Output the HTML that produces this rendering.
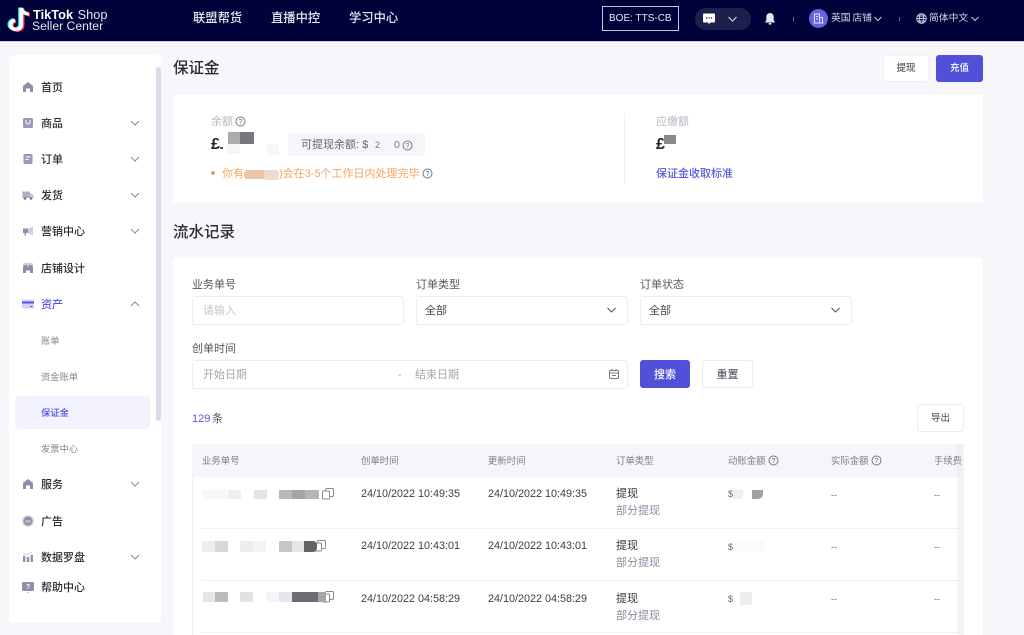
<!DOCTYPE html>
<html lang="zh"><head><meta charset="utf-8"><title>保证金</title>
<style>
*{box-sizing:border-box}
html,body{margin:0;padding:0}
html{background:#f6f6fb}
body{width:1024px;height:635px;overflow:hidden;position:relative;background:#f6f6fb;font-family:"Liberation Sans","Noto Sans CJK SC",sans-serif;color:#33333d;filter:blur(.3px)}
.a,.t,svg.a{position:absolute}
.t{white-space:nowrap;line-height:16px;font-size:11px}
.c{transform:translateY(-50%)}
.m{left:41px;font-weight:500;color:#2c2c36;font-size:11px}
.s{left:41px;font-size:9.3px;color:#85858f}
.h{font-size:9.4px;color:#7d7d8a}
.l{font-size:11px;color:#55555f}
.b{position:absolute;background:#fff;border:1px solid #ebebf4;border-radius:3px}
.d{font-size:10.8px;color:#3c3c46;font-family:"Liberation Sans",sans-serif}
.r{font-size:11px;color:#33333d}
.g{font-size:11px;color:#8a8a9e}
.x{font-size:9px;color:#666670}
.p{position:absolute}
.line{position:absolute;left:202px;width:762px;height:1px;background:#f0f0f5}
</style></head><body>
<!-- header -->
<div class="a" style="left:0;top:0;width:1024px;height:42px;background:#00023a;border-bottom:1px solid #c9c9de"></div>
<svg class="a" style="left:5px;top:5.5px" width="28" height="27.5" viewBox="0 0 24 27" preserveAspectRatio="none" fill="none">
<path d="M14 2V18.5A4.6 4.6 0 1 1 8.5 14" stroke="#ff2d55" stroke-width="3.4" transform="translate(1 .8)"/>
<path d="M14 2C14.6 5.5 17 7.5 20.5 8" stroke="#ff2d55" stroke-width="3.2" transform="translate(1 .8)"/>
<path d="M14 2V18.5A4.6 4.6 0 1 1 8.5 14" stroke="#25f4ee" stroke-width="3.4" transform="translate(-1 -.5)"/>
<path d="M14 2C14.6 5.5 17 7.5 20.5 8" stroke="#25f4ee" stroke-width="3.2" transform="translate(-1 -.5)"/>
<path d="M14 2V18.5A4.6 4.6 0 1 1 8.5 14" stroke="#fff" stroke-width="3.2"/>
<path d="M14 2C14.6 5.5 17 7.5 20.5 8" stroke="#fff" stroke-width="3"/>
</svg>
<div class="t" style="left:33px;top:7px;font-size:12.8px;color:#fff"><b>TikTok</b> <span style="color:#e4e4ec;margin-left:1px">Shop</span></div>
<div class="t" style="left:32px;top:18px;font-size:12.2px;color:#e4e4ec">Seller Center</div>
<div class="t" style="left:193px;top:10px;font-size:12.3px;color:#e8e8f0;font-weight:500">联盟帮货</div>
<div class="t" style="left:271px;top:10px;font-size:12.3px;color:#e8e8f0;font-weight:500">直播中控</div>
<div class="t" style="left:349px;top:10px;font-size:12.3px;color:#e8e8f0;font-weight:500">学习中心</div>
<div class="a" style="left:602px;top:6px;width:77px;height:25px;border:1px solid #c6c6d4"></div>
<div class="t" style="left:609px;top:11px;font-size:10px;color:#e6e6ee">BOE: TTS-CB</div>
<div class="a" style="left:695px;top:8px;width:56px;height:22px;border-radius:11px;background:#1d1f4c"></div>
<svg class="a" style="left:702px;top:12px" width="14" height="14" viewBox="0 0 14 14"><path d="M2 1.5H12A1 1 0 0 1 13 2.5V9.500A1 1 0 0 1 12 10.500H8.500L6.500 12.500V10.500H2A1 1 0 0 1 1 9.500V2.500A1 1 0 0 1 2 1.500Z" fill="#fff"/><circle cx="4.500" cy="6" r=".7" fill="#1d1f4c"/><circle cx="7" cy="6" r=".7" fill="#1d1f4c"/><circle cx="9.500" cy="6" r=".7" fill="#1d1f4c"/></svg>
<svg class="a" style="left:727px;top:15px" width="11" height="8" viewBox="0 0 11 8" fill="none"><path d="M1.500 2 5.500 6 9.500 2" stroke="#d8d8e4" stroke-width="1.100"/></svg>
<svg class="a" style="left:763px;top:12px" width="14" height="14" viewBox="0 0 14 14"><path d="M7 1C4.500 1 3.300 3 3.300 5V8.300L2 10.500H12L10.700 8.300V5C10.700 3 9.500 1 7 1Z" fill="#e6e6ee"/><rect x="5.500" y="11" width="3" height="1.600" rx=".8" fill="#e6e6ee"/></svg>
<div class="a" style="left:793px;top:17px;width:1px;height:4px;background:#6b6b85"></div>
<div class="a" style="left:809px;top:9px;width:19px;height:19px;border-radius:50%;background:#6464e4"></div>
<svg class="a" style="left:813px;top:13px" width="11" height="11" viewBox="0 0 11 11" fill="none" stroke="#e3e3fa" stroke-width="1"><path d="M1.500 10V1H6.500V10M6.500 4.500H9.500V10M.5 10H10.500M3 3.500H5M3 6H5"/></svg>
<div class="t" style="left:831px;top:11px;font-size:9.800px;color:#d6d6e2;word-spacing:-1px">英国 店铺</div>
<svg class="a" style="left:873px;top:15px" width="10" height="8" viewBox="0 0 10 8" fill="none"><path d="M1.500 2 5 5.500 8.500 2" stroke="#c9c9d8"/></svg>
<div class="a" style="left:899px;top:17px;width:1px;height:4px;background:#6b6b85"></div>
<svg class="a" style="left:916px;top:13px" width="11" height="11" viewBox="0 0 11 11" fill="none" stroke="#d4d4e2" stroke-width=".9"><circle cx="5.500" cy="5.500" r="4.800"/><ellipse cx="5.500" cy="5.500" rx="2.200" ry="4.800"/><path d="M.7 5.500H10.300M1.400 3H9.600M1.400 8H9.600"/></svg>
<div class="t" style="left:929px;top:11px;font-size:9.800px;color:#d6d6e2">简体中文</div>
<svg class="a" style="left:970px;top:15px" width="10" height="8" viewBox="0 0 10 8" fill="none"><path d="M1.500 2 5 5.500 8.500 2" stroke="#c9c9d8"/></svg>

<!-- sidebar -->
<div class="a" style="left:9px;top:55px;width:152px;height:568px;background:#fff;border-radius:4px"></div>
<div class="a" style="left:156px;top:67px;width:5px;height:354px;background:#dcdce8;border-radius:3px"></div>
<div class="a" style="left:15px;top:396px;width:135px;height:33px;background:#f3f3fd;border-radius:4px"></div>
<div class="t c m" style="top:87.5px">首页</div>
<div class="t c m" style="top:123.5px">商品</div>
<div class="t c m" style="top:159.5px">订单</div>
<div class="t c m" style="top:195.5px">发货</div>
<div class="t c m" style="top:231.5px">营销中心</div>
<div class="t c m" style="top:268.5px">店铺设计</div>
<div class="t c m" style="top:304.5px;color:#5a5ae6">资产</div>
<div class="t c s" style="top:340.5px">账单</div>
<div class="t c s" style="top:376.5px">资金账单</div>
<div class="t c s" style="top:412.5px;color:#5050e0;font-weight:500">保证金</div>
<div class="t c s" style="top:448.5px">发票中心</div>
<div class="t c m" style="top:484.5px">服务</div>
<div class="t c m" style="top:521.5px">广告</div>
<div class="t c m" style="top:557.5px">数据罗盘</div>
<div class="t c m" style="top:587.5px">帮助中心</div>
<!-- sidebar icons -->
<svg class="a" style="left:22px;top:81px" width="12" height="12" viewBox="0 0 12 12"><path d="M1 5 6 1 11 5V11H8V7.500H4V11H1Z" fill="#8e8ea8"/></svg>
<svg class="a" style="left:22px;top:117px" width="12" height="12" viewBox="0 0 12 12"><rect x="1" y="1" width="10" height="10" rx="1.500" fill="#9a9ab4"/><path d="M4 3V5A2 2 0 0 0 8 5V3" stroke="#fff" fill="none"/></svg>
<svg class="a" style="left:22px;top:153px" width="12" height="12" viewBox="0 0 12 12"><rect x="1.500" y="1" width="9" height="10" rx="1.300" fill="#9a9ab4"/><path d="M3.500 4H8.500M3.500 6.500H6.500" stroke="#fff"/></svg>
<svg class="a" style="left:22px;top:189px" width="12" height="12" viewBox="0 0 12 12"><rect x=".5" y="2.500" width="7.500" height="6.500" fill="#adadc0"/><path d="M8 4.500H10L11.500 6.500V9H8Z" fill="#c4c4d4"/><circle cx="3" cy="9.500" r="1.400" fill="#80809c"/><circle cx="9" cy="9.500" r="1.400" fill="#80809c"/></svg>
<svg class="a" style="left:22px;top:225px" width="12" height="12" viewBox="0 0 12 12"><path d="M1 3.500H6V8H4V10.500H2.500V8H1Z" fill="#8e8ea8"/><path d="M6 3.500 11 1.200V10.300L6 8Z" fill="#cfcfde"/></svg>
<svg class="a" style="left:22px;top:262px" width="12" height="12" viewBox="0 0 12 12"><path d="M1 2.500A1.500 1.500 0 0 1 2.500 1H9.500A1.500 1.500 0 0 1 11 2.500V4H1Z" fill="#cdcddc"/><path d="M1 5.500A2.200 2.200 0 0 1 6 5.500A2.200 2.200 0 0 1 11 5.500V11H8V8.500H4V11H1Z" fill="#8e8ea8"/></svg>
<svg class="a" style="left:22px;top:298px" width="12" height="12" viewBox="0 0 12 12"><rect y="1.500" width="12" height="9" rx="1" fill="#d3d3f6"/><rect y="3.500" width="12" height="2" fill="#5050e0"/><rect x="8" y="8" width="2.500" height="1" fill="#5050e0"/></svg>
<svg class="a" style="left:22px;top:478px" width="12" height="12" viewBox="0 0 12 12"><path d="M1 5 6 1 11 5V11H8V7.500H4V11H1Z" fill="#8e8ea8"/></svg>
<svg class="a" style="left:22px;top:515px" width="12" height="12" viewBox="0 0 12 12"><circle cx="6" cy="6" r="5.800" fill="#d2d2e0"/><circle cx="6" cy="6" r="4.500" fill="#9090a8"/><text x="6" y="7.500" font-size="4" fill="#fff" text-anchor="middle" font-family="Liberation Sans">AD</text></svg>
<svg class="a" style="left:22px;top:551px" width="12" height="12" viewBox="0 0 12 12"><rect x="1" y="5" width="2.400" height="6" fill="#9090a8"/><rect x="4.800" y="6" width="2.400" height="5" fill="#9090a8"/><rect x="8.600" y="4" width="2.400" height="7" fill="#9090a8"/><path d="M1 3 5 4 10 1" stroke="#cfcfde" fill="none"/></svg>
<svg class="a" style="left:22px;top:581px" width="12" height="12" viewBox="0 0 12 12"><rect y="1" width="12" height="9" rx="1.200" fill="#9090a8"/><path d="M5 11H7L6 12Z" fill="#9090a8"/><text x="6" y="8" font-size="7" fill="#fff" text-anchor="middle" font-family="Liberation Sans" font-weight="700">?</text></svg>
<svg class="a" style="left:129px;top:0;" width="12" height="600" viewBox="0 0 12 600" fill="none" stroke="#8b8b98" stroke-width="1"><path d="M2 121 6 125 10 121M2 157 6 161 10 157M2 193 6 197 10 193M2 229 6 233 10 229M2 306 6 302 10 306M2 482 6 486 10 482M2 555 6 559 10 555"/></svg>

<!-- title -->
<div class="t c" style="left:173px;top:68.5px;font-size:15.5px;font-weight:500;color:#2c2c36;line-height:22px">保证金</div>
<div class="a" style="left:883px;top:55px;width:46px;height:27px;background:#fff;border-radius:3px;border:1px solid #f0f0f6"></div>
<div class="t c" style="left:883px;width:46px;text-align:center;top:68.5px;font-size:9.5px;color:#55555f;font-weight:500">提现</div>
<div class="a" style="left:936px;top:55px;width:47px;height:27px;background:#5050d8;border-radius:3px"></div>
<div class="t c" style="left:936px;width:47px;text-align:center;top:68.5px;font-size:9.5px;color:#fff;font-weight:500">充值</div>

<!-- card 1 -->
<div class="a" style="left:173px;top:95px;width:810px;height:108px;background:#fff"></div>
<div class="t c" style="left:211px;top:121.5px;font-size:11px;color:#b6b6c2">余额</div>
<svg class="a" style="left:235px;top:116px" width="11" height="11" viewBox="0 0 11 11" fill="none"><circle cx="5.500" cy="5.500" r="4.500" stroke="#77777f"/><text x="5.500" y="8" font-size="7" text-anchor="middle" fill="#66666e" font-family="Liberation Sans">?</text></svg>
<div class="t c" style="left:211px;top:144.5px;font-size:16px;font-weight:700;color:#23232b">£</div>
<div class="p" style="left:220px;top:147px;width:3px;height:2px;background:#555"></div>
<div class="p" style="left:228px;top:132px;width:13px;height:12px;background:#acacb0"></div>
<div class="p" style="left:240px;top:132px;width:14px;height:12px;background:#76767c"></div>
<div class="p" style="left:227px;top:144px;width:13px;height:10px;background:#f6f6f8"></div>
<div class="p" style="left:266px;top:144px;width:13px;height:11px;background:#f7f7f9"></div>
<div class="a" style="left:288px;top:133px;width:137px;height:23px;background:#f6f6fa"></div>
<div class="t c" style="left:301px;top:144.5px;font-size:11px;color:#62626c">可提现余额: <span style="letter-spacing:1.5px">$</span></div>
<div class="t c" style="left:375px;top:144.5px;font-size:9px;color:#777">2</div>
<div class="t c" style="left:394px;top:144.5px;font-size:10.5px;color:#777">0</div>
<svg class="a" style="left:402px;top:140px" width="11" height="11" viewBox="0 0 11 11" fill="none"><circle cx="5.500" cy="5.500" r="4.500" stroke="#77777f"/><text x="5.500" y="8" font-size="7" text-anchor="middle" fill="#66666e" font-family="Liberation Sans">?</text></svg>
<div class="a" style="left:211px;top:171px;width:4px;height:4px;border-radius:50%;background:#f39a55"></div>
<div class="t c" style="left:222px;top:173.5px;font-size:11px;color:#f5a45f">你有</div>
<div class="p" style="left:244px;top:170px;width:23px;height:9px;background:#edc4a4;border-radius:3px"></div>
<div class="p" style="left:264px;top:170px;width:15px;height:10px;background:#ecdcd0;border-radius:3px"></div>
<div class="t c" style="left:279px;top:173.5px;font-size:11px;color:#f5a45f">)会在3-5个工作日内处理完毕</div>
<svg class="a" style="left:422px;top:168px" width="11" height="11" viewBox="0 0 11 11" fill="none"><circle cx="5.500" cy="5.500" r="4.500" stroke="#77777f"/><text x="5.500" y="8" font-size="7" text-anchor="middle" fill="#66666e" font-family="Liberation Sans">?</text></svg>
<div class="a" style="left:624px;top:114px;width:1px;height:70px;background:#f0f0f5"></div>
<div class="t c" style="left:656px;top:121.5px;font-size:11px;color:#b6b6c2">应缴额</div>
<div class="t c" style="left:656px;top:144.5px;font-size:16px;font-weight:700;color:#23232b">£</div>
<div class="p" style="left:664px;top:135px;width:12px;height:9px;background:#8a8a8e"></div>
<div class="t c" style="left:656px;top:173.5px;font-size:11px;color:#5a5ae0;font-weight:500">保证金收取标准</div>

<!-- section title -->
<div class="t c" style="left:173px;top:232.5px;font-size:15.5px;font-weight:500;color:#2c2c36;line-height:22px">流水记录</div>

<!-- card 2 -->
<div class="a" style="left:173px;top:258px;width:810px;height:377px;background:#fff"></div>
<div class="t c l" style="left:192px;top:284.5px">业务单号</div>
<div class="t c l" style="left:416px;top:284.5px">订单类型</div>
<div class="t c l" style="left:640px;top:284.5px">订单状态</div>
<div class="b" style="left:192px;top:296px;width:212px;height:29px"></div>
<div class="b" style="left:416px;top:296px;width:212px;height:29px"></div>
<div class="b" style="left:640px;top:296px;width:212px;height:29px"></div>
<div class="t c" style="left:203px;top:310.5px;font-size:11px;color:#c6c6ce">请输入</div>
<div class="t c" style="left:425px;top:310.5px;font-size:11px;color:#44444e">全部</div>
<div class="t c" style="left:649px;top:310.5px;font-size:11px;color:#44444e">全部</div>
<svg class="a" style="left:606px;top:306px" width="11" height="9" viewBox="0 0 11 9" fill="none"><path d="M1.500 2 5.500 6 9.500 2" stroke="#555560"/></svg>
<svg class="a" style="left:830px;top:306px" width="11" height="9" viewBox="0 0 11 9" fill="none"><path d="M1.500 2 5.500 6 9.500 2" stroke="#555560"/></svg>
<div class="t c l" style="left:192px;top:348.5px">创单时间</div>
<div class="b" style="left:192px;top:360px;width:436px;height:29px"></div>
<div class="t c" style="left:203px;top:374.5px;font-size:11px;color:#a5a5ae">开始日期</div>
<div class="t c" style="left:398px;top:374.5px;font-size:11px;color:#a5a5ae">-</div>
<div class="t c" style="left:415px;top:374.5px;font-size:11px;color:#a5a5ae">结束日期</div>
<svg class="a" style="left:608px;top:368px" width="12" height="12" viewBox="0 0 12 12" fill="none" stroke="#77777f"><rect x="1.500" y="2.500" width="9" height="8" rx="1"/><path d="M1.500 5H10.500M4 1V3M8 1V3M4 7.500H8"/></svg>
<div class="a" style="left:640px;top:360px;width:50px;height:28px;background:#5050d8;border-radius:3px"></div>
<div class="t c" style="left:640px;width:50px;text-align:center;top:374.5px;font-size:11px;color:#fff;font-weight:500">搜索</div>
<div class="a" style="left:702px;top:360px;width:51px;height:28px;border:1px solid #ebebf1;border-radius:3px;background:#fff"></div>
<div class="t c" style="left:702px;width:51px;text-align:center;top:374.5px;font-size:11px;color:#44444e">重置</div>
<div class="t c" style="left:192px;top:418.5px;font-size:11px;color:#5a5ae0">129</div>
<div class="t c" style="left:212px;top:418.5px;font-size:11px;color:#55555f">条</div>
<div class="a" style="left:917px;top:404px;width:47px;height:28px;border:1px solid #ebebf1;border-radius:3px;background:#fff"></div>
<div class="t c" style="left:917px;width:47px;text-align:center;top:418.5px;font-size:9.5px;color:#44444e">导出</div>

<!-- table -->
<div class="a" style="left:192px;top:444px;width:772px;height:191px;border-left:1px solid #f0f0f5;border-right:1px solid #f0f0f5"></div>
<div class="a" style="left:192px;top:444px;width:772px;height:33px;background:#f6f6fa;border-radius:3px 3px 0 0"></div>
<div class="t c h" style="left:202px;top:460.5px">业务单号</div>
<div class="t c h" style="left:361px;top:460.5px">创单时间</div>
<div class="t c h" style="left:488px;top:460.5px">更新时间</div>
<div class="t c h" style="left:616px;top:460.5px">订单类型</div>
<div class="t c h" style="left:728px;top:460.5px">动账金额</div>
<div class="t c h" style="left:831px;top:460.5px">实际金额</div>
<div class="t c h" style="left:934px;top:460.5px">手续费</div>
<svg class="a" style="left:768px;top:455px" width="11" height="11" viewBox="0 0 11 11" fill="none"><circle cx="5.500" cy="5.500" r="4.500" stroke="#77777f"/><text x="5.500" y="8" font-size="7" text-anchor="middle" fill="#66666e" font-family="Liberation Sans">?</text></svg>
<svg class="a" style="left:871px;top:455px" width="11" height="11" viewBox="0 0 11 11" fill="none"><circle cx="5.500" cy="5.500" r="4.500" stroke="#77777f"/><text x="5.500" y="8" font-size="7" text-anchor="middle" fill="#66666e" font-family="Liberation Sans">?</text></svg>
<div class="line" style="top:528px"></div><div class="line" style="top:580px"></div><div class="line" style="top:632px"></div>
<div class="a" style="left:957px;top:444px;width:6px;height:191px;background:rgba(225,225,235,.35)"></div>

<!-- row 1 -->
<div class="p" style="left:202px;top:490px;width:25px;height:9px;background:#f8f8fa"></div>
<div class="p" style="left:228px;top:490px;width:13px;height:9px;background:#efeff1"></div>
<div class="p" style="left:254px;top:490px;width:13px;height:9px;background:#e4e4e6"></div>
<div class="p" style="left:279px;top:490px;width:13px;height:9px;background:#b9b9bd"></div>
<div class="p" style="left:292px;top:490px;width:13px;height:9px;background:#a5a5a9"></div>
<div class="p" style="left:305px;top:490px;width:14px;height:9px;background:#b6b6ba"></div>
<svg class="a" style="left:322px;top:488px" width="12" height="12" viewBox="0 0 12 12" fill="none" stroke="#8a8a92"><rect x="3.500" y=".5" width="8" height="8" rx="1"/><rect x=".5" y="3" width="7" height="8" rx="1" fill="#fff"/></svg>
<div class="t c d" style="left:361px;top:493.5px">24/10/2022 10:49:35</div>
<div class="t c d" style="left:488px;top:493.5px">24/10/2022 10:49:35</div>
<div class="t c r" style="left:616px;top:493.5px">提现</div>
<div class="t c g" style="left:616px;top:510.5px">部分提现</div>
<div class="t c x" style="left:728px;top:493.5px">$</div>
<div class="p" style="left:733px;top:490px;width:10px;height:9px;background:#f0f0f2"></div>
<div class="p" style="left:752px;top:490px;width:11px;height:9px;background:#a0a0a4;border-radius:0 0 5px 0"></div>
<div class="t c x" style="left:831px;top:494.5px">--</div>
<div class="t c x" style="left:934px;top:494.5px">--</div>

<!-- row 2 -->
<div class="p" style="left:202px;top:541px;width:13px;height:11px;background:#eeeef0"></div>
<div class="p" style="left:215px;top:541px;width:13px;height:11px;background:#d8d8da"></div>
<div class="p" style="left:240px;top:541px;width:13px;height:11px;background:#eeeef1"></div>
<div class="p" style="left:253px;top:541px;width:13px;height:11px;background:#f4f4f5"></div>
<div class="p" style="left:279px;top:541px;width:13px;height:11px;background:#c6c6c8"></div>
<div class="p" style="left:292px;top:541px;width:12px;height:11px;background:#e6e6e8"></div>
<svg class="a" style="left:314px;top:540px" width="12" height="12" viewBox="0 0 12 12" fill="none" stroke="#8a8a92"><rect x="3.500" y=".5" width="8" height="8" rx="1"/><rect x=".5" y="3" width="7" height="8" rx="1" fill="#fff"/></svg>
<div class="p" style="left:304px;top:541px;width:13px;height:11px;background:#636367;border-radius:0 4px 4px 0"></div>
<div class="t c d" style="left:361px;top:545.5px">24/10/2022 10:43:01</div>
<div class="t c d" style="left:488px;top:545.5px">24/10/2022 10:43:01</div>
<div class="t c r" style="left:616px;top:545.5px">提现</div>
<div class="t c g" style="left:616px;top:562.5px">部分提现</div>
<div class="t c x" style="left:728px;top:546.5px">$</div>
<div class="p" style="left:733px;top:541px;width:32px;height:10px;background:#fafafb"></div>
<div class="t c x" style="left:831px;top:546.5px">--</div>
<div class="t c x" style="left:934px;top:546.5px">--</div>

<!-- row 3 -->
<div class="p" style="left:203px;top:592px;width:12px;height:10px;background:#e6e6e8"></div>
<div class="p" style="left:215px;top:592px;width:13px;height:10px;background:#bcbcc0"></div>
<div class="p" style="left:240px;top:592px;width:13px;height:10px;background:#e2e2e4"></div>
<div class="p" style="left:266px;top:592px;width:26px;height:10px;background:#f5f5f8"></div>
<div class="p" style="left:279px;top:592px;width:13px;height:10px;background:#e6e6ee"></div>
<svg class="a" style="left:322px;top:591px" width="12" height="12" viewBox="0 0 12 12" fill="none" stroke="#8a8a92"><rect x="3.500" y=".5" width="8" height="8" rx="1"/><rect x=".5" y="3" width="7" height="8" rx="1" fill="#fff"/></svg>
<div class="p" style="left:292px;top:592px;width:26px;height:10px;background:#6c6c70"></div>
<div class="p" style="left:318px;top:592px;width:8px;height:10px;background:#a5a5a9"></div>
<div class="t c d" style="left:361px;top:598.5px">24/10/2022 04:58:29</div>
<div class="t c d" style="left:488px;top:598.5px">24/10/2022 04:58:29</div>
<div class="t c r" style="left:616px;top:598.5px">提现</div>
<div class="t c g" style="left:616px;top:615.5px">部分提现</div>
<div class="t c x" style="left:728px;top:598.5px">$</div>
<div class="p" style="left:740px;top:592px;width:12px;height:13px;background:#ededef"></div>
<div class="t c x" style="left:831px;top:598.5px">--</div>
<div class="t c x" style="left:934px;top:598.5px">--</div>
</body></html>
